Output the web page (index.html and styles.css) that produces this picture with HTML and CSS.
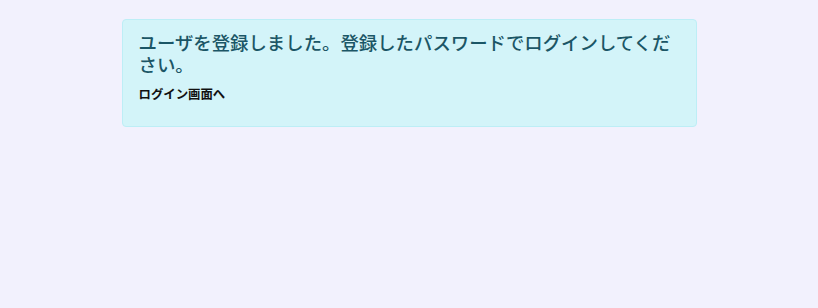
FILE: index.html
```html
<!DOCTYPE html>
<html lang="ja">
<head>
<meta charset="utf-8">
<title>登録完了</title>
<link rel="stylesheet" href="styles.css">
</head>
<body>
<main class="page">
  <div class="alert">
    <h4 class="alert-title">ユーザを登録しました。登録したパスワードでログインしてください。</h4>
    <p class="alert-body"><a class="alert-link" href="#">ログイン画面へ</a></p>
  </div>
</main>
</body>
</html>
```
FILE: styles.css
```css
html, body {
  margin: 0;
  padding: 0;
}
body {
  background: #f2f1fd;
  font-family: "Noto Sans CJK JP", "Noto Sans", sans-serif;
  width: 818px;
  height: 308px;
}
.page {
  padding-top: 19px;
  display: flex;
  justify-content: center;
}
.alert {
  box-sizing: border-box;
  width: 575px;
  height: 108px;
  background: #d3f4f9;
  border: 1px solid #bdeef6;
  border-radius: 4px;
  padding: 11px 16px 16px 16px;
}
.alert-title {
  margin: 0 0 10px 0;
  font-size: 18.4px;
  line-height: 22px;
  font-weight: 500;
  color: #1b5666;
}
.alert-body {
  margin: 0;
  font-size: 12.4px;
  line-height: 19px;
}
.alert-link {
  color: #111;
  font-weight: 700;
  text-decoration: none;
}
```
